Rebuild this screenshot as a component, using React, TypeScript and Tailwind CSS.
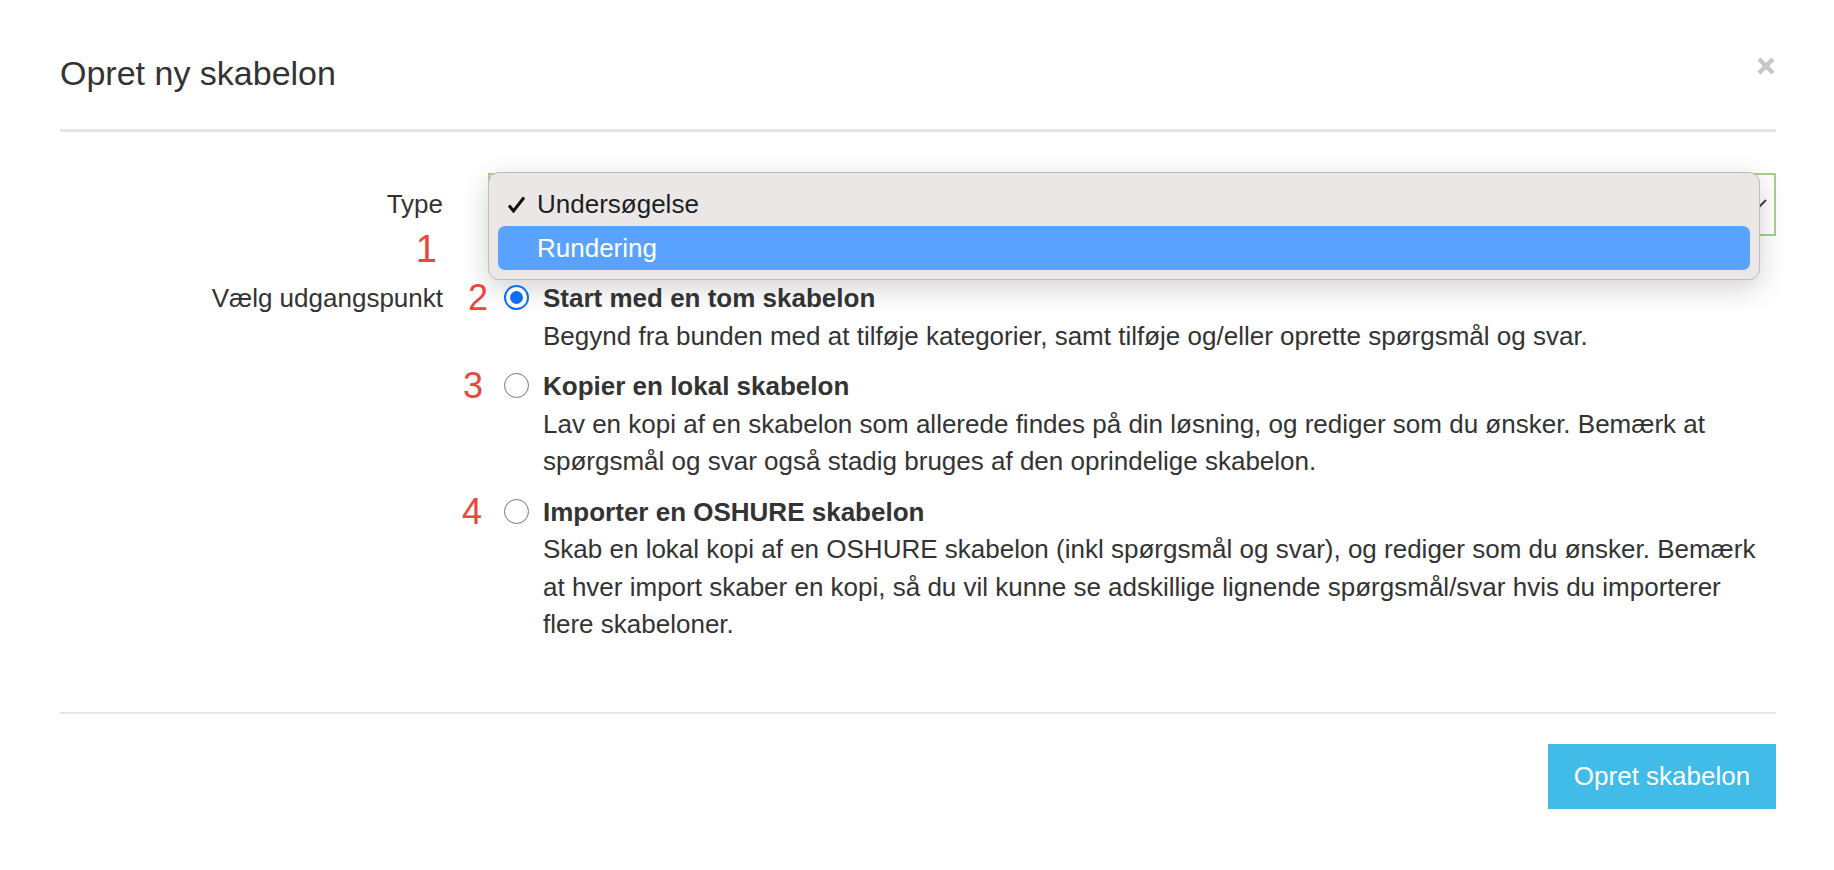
import React from 'react';

type Option = {
    mark: string;
    markLeft: string;
    title: string;
    text: string;
    checked: boolean;
};

const OPTIONS: Option[] = [
    {
        mark: '2',
        markLeft: 'left-[-20px]',
        title: 'Start med en tom skabelon',
        text: 'Begynd fra bunden med at tilføje kategorier, samt tilføje og/eller oprette spørgsmål og svar.',
        checked: true,
    },
    {
        mark: '3',
        markLeft: 'left-[-25px]',
        title: 'Kopier en lokal skabelon',
        text: 'Lav en kopi af en skabelon som allerede findes på din løsning, og rediger som du ønsker. Bemærk at spørgsmål og svar også stadig bruges af den oprindelige skabelon.',
        checked: false,
    },
    {
        mark: '4',
        markLeft: 'left-[-26px]',
        title: 'Importer en OSHURE skabelon',
        text: 'Skab en lokal kopi af en OSHURE skabelon (inkl spørgsmål og svar), og rediger som du ønsker. Bemærk at hver import skaber en kopi, så du vil kunne se adskillige lignende spørgsmål/svar hvis du importerer flere skabeloner.',
        checked: false,
    },
];

function Radio({ checked }: { checked: boolean }) {
    if (checked) {
        return (
            <span className="mt-[5px] flex h-[25px] w-[25px] shrink-0 items-center justify-center rounded-full border-[2.5px] border-[#0d6ff0] bg-white">
                <span className="h-[13px] w-[13px] rounded-full bg-[#0d6ff0]" />
            </span>
        );
    }
    return <span className="mt-[5px] h-[25px] w-[25px] shrink-0 rounded-full border-[1.5px] border-[#777] bg-white" />;
}

export default function App() {
    return (
        <div className="min-h-[870px] w-full bg-white font-['Liberation_Sans',Arial,sans-serif] text-[#333]">
            <div className="pl-[60px] pr-[58px]">
                {/* header */}
                <div className="flex items-start justify-between border-b-[3px] border-[#e5e5e5] pt-[55px] pb-[37px]">
                    <h4 className="text-[34px] leading-[37px]">Opret ny skabelon</h4>
                    <button className="mt-[1px] h-[20px] w-[20px]">
                        <svg width="20" height="20" viewBox="0 0 20 20">
                            <path d="M3 3 L17 17 M17 3 L3 17" stroke="#c6c6c6" strokeWidth="4.5" />
                        </svg>
                    </button>
                </div>

                {/* body */}
                <div className="pt-[41px]">
                    <div className="flex">
                        <div className="relative w-[383px] shrink-0 text-right text-[26px] leading-[63px]">
                            Type
                            <span className="absolute right-[6px] top-[57px] text-[38px] leading-none text-[#e8473b]">1</span>
                        </div>
                        <div className="relative ml-[45px] h-[63px] flex-1 border-2 border-[#a5d18c] bg-white">
                            <svg className="absolute right-[7px] top-[24px]" width="16" height="10" viewBox="0 0 16 10">
                                <path d="M1 1 L8 8 L15 1" stroke="#444" strokeWidth="2" fill="none" />
                            </svg>
                            <div className="absolute left-[-2px] right-[14px] top-[-3px] h-[108px] rounded-[11px] border border-[#bcbcbc] bg-[#ebe7e7] px-[9px] py-[9px] text-[26px] shadow-[0_8px_28px_rgba(0,0,0,0.18)]">
                                <div className="flex h-[44px] items-center pl-[9px] text-[#1e1e1e]">
                                    <svg width="19" height="17" viewBox="0 0 19 17" className="mr-[11px]">
                                        <path d="M2 9.5 L6.5 15 L17 1.5" stroke="#111" strokeWidth="3" fill="none" />
                                    </svg>
                                    Undersøgelse
                                </div>
                                <div className="flex h-[44px] items-center rounded-[7px] bg-[#59a2ff] pl-[39px] text-white">
                                    Rundering
                                </div>
                            </div>
                        </div>
                    </div>

                    <div className="mt-[44px] flex">
                        <div className="w-[383px] shrink-0 text-right text-[26px] leading-[37.5px]">Vælg udgangspunkt</div>
                        <div className="ml-[45px] flex flex-1 flex-col gap-[13px]">
                            {OPTIONS.map((opt) => (
                                <label key={opt.mark} className="relative flex gap-[14px] pl-[16px]">
                                    <span className={`absolute top-0 ${opt.markLeft} text-[36px] leading-none text-[#e8473b]`}>
                                        {opt.mark}
                                    </span>
                                    <Radio checked={opt.checked} />
                                    <div className="text-[26px] leading-[37.5px]">
                                        <div className="font-bold">{opt.title}</div>
                                        <div>{opt.text}</div>
                                    </div>
                                </label>
                            ))}
                        </div>
                    </div>
                </div>

                {/* footer */}
                <div className="mt-[68px] flex justify-end border-t-2 border-[#e5e5e5] pt-[30px]">
                    <button className="h-[65px] w-[228px] bg-[#41bbe8] text-[26px] text-white">Opret skabelon</button>
                </div>
            </div>
        </div>
    );
}
